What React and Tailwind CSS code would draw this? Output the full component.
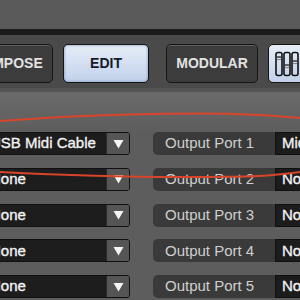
import React from 'react';

const rows = [
  { src: 'USB Midi Cable', port: 'Output Port 1', dest: 'Midi Cable' },
  { src: 'None', port: 'Output Port 2', dest: 'None' },
  { src: 'None', port: 'Output Port 3', dest: 'None' },
  { src: 'None', port: 'Output Port 4', dest: 'None' },
  { src: 'None', port: 'Output Port 5', dest: 'None' },
];

function ModeButton({ label, active, width }) {
  return (
    <div
      className={`${width} h-[39px] shrink-0 rounded-[5px] border border-[#151515] flex items-center justify-center font-bold text-[14px] ${
        active
          ? 'bg-gradient-to-b from-[#e6edf8] to-[#c2d1ea] text-[#151b28] shadow-[inset_0_0_3px_rgba(90,120,170,0.8)]'
          : 'bg-[#3c3c3c] text-[#e2e2e2] shadow-[inset_0_1px_0_#5e5e5e]'
      }`}
    >
      {label}
    </div>
  );
}

function MixerIcon() {
  return (
    <svg width="30" height="26" viewBox="0 0 30 26">
      {[2, 10, 18].map((x, i) => (
        <g key={i}>
          <rect x={x} y="1.5" width="6" height="23" rx="2" fill="none" stroke="#111" strokeWidth="1.6" />
          <line x1={x + 1} x2={x + 5} y1={[6, 14, 10][i]} y2={[6, 14, 10][i]} stroke="#111" strokeWidth="1.2" />
          <line x1={x + 1} x2={x + 5} y1={[8.5, 16.5, 12.5][i]} y2={[8.5, 16.5, 12.5][i]} stroke="#888" strokeWidth="1.2" />
        </g>
      ))}
    </svg>
  );
}

function Row({ src, port, dest }) {
  return (
    <div className="flex h-[23px] items-stretch">
      <div className="ml-[-20px] w-[150px] flex rounded-[3px] border border-[#101010] overflow-hidden shrink-0">
        <div className="flex-1 bg-[#1d1d1d] flex items-center pl-[9px] text-[15px] text-[#f2f2f2] whitespace-nowrap [-webkit-text-stroke:0.35px_#f2f2f2]">
          {src}
        </div>
        <div className="w-[23px] bg-[#555555] border-l border-[#2a2a2a] flex items-center justify-center">
          <svg width="11" height="10" viewBox="0 0 11 10">
            <path d="M0.5 1 L10.5 1 L5.5 9.5 Z" fill="#f4f4f4" />
          </svg>
        </div>
      </div>
      <div className="ml-[23px] w-[122px] shrink-0 rounded-l-[5px] bg-[#3a3a3a] flex items-center pl-[12px] text-[15px] text-[#cfcfcf] whitespace-nowrap">
        {port}
      </div>
      <div className="w-[60px] shrink-0 bg-[#1c1c1c] border border-[#0f0f0f] flex items-center pl-[6px] text-[15px] text-[#f2f2f2] whitespace-nowrap overflow-hidden [-webkit-text-stroke:0.35px_#f2f2f2]">
        {dest}
      </div>
    </div>
  );
}

export default function App() {
  return (
    <div
      className="relative w-[300px] h-[300px] overflow-hidden bg-[#5d5d5d]"
      style={{ fontFamily: '"Liberation Sans", Arial, sans-serif' }}
    >
      <div className="h-[29px] bg-[#5a5a5a]" />
      <div className="h-[6px] bg-[#1b1b1b]" />
      <div className="h-[53px] bg-[#4a4a4a] pt-[9px]">
        <div className="flex ml-[-39px]">
          <ModeButton label="COMPOSE" width="w-[92px]" />
          <div className="w-[10px] shrink-0" />
          <ModeButton label="EDIT" width="w-[86px]" active />
          <div className="w-[17px] shrink-0" />
          <ModeButton label="MODULAR" width="w-[92px]" />
          <div className="w-[10px] shrink-0" />
          <div className="w-[50px] h-[39px] shrink-0 rounded-[5px] border border-[#151515] bg-gradient-to-b from-[#e6edf8] to-[#c2d1ea] flex items-center pl-[5px]">
            <MixerIcon />
          </div>
        </div>
      </div>
      <div className="h-[4px] bg-[#555555]" />
      <div className="bg-gradient-to-b from-[#6b6b6b] to-[#5d5d5d] h-[40px]" />
      <div className="flex flex-col gap-[12.75px]">
        {rows.map((r) => (
          <Row key={r.port} {...r} />
        ))}
      </div>
      <svg className="absolute inset-0 pointer-events-none" width="300" height="300" viewBox="0 0 300 300">
        <path
          d="M0 121 C 40 118, 90 115, 150 114 S 250 113, 300 118"
          fill="none"
          stroke="#d8452b"
          strokeWidth="2"
        />
        <path
          d="M0 172 C 40 174, 100 177, 180 177 S 270 176, 300 172"
          fill="none"
          stroke="#d8452b"
          strokeWidth="2"
        />
      </svg>
    </div>
  );
}
